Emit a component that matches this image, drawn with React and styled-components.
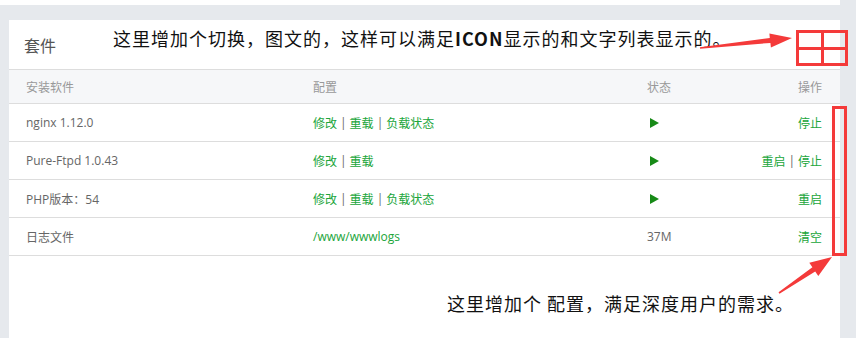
import React from 'react';
import styled, { createGlobalStyle } from 'styled-components';

const GlobalStyle = createGlobalStyle`
	html, body {
		margin: 0;
		padding: 0;
		background: #e6e9ed;
		font-family: "Open Sans", "Noto Sans CJK SC", sans-serif;
	}
`;

const Page = styled.div`
	position: relative;
	width: 856px;
	height: 338px;
	overflow: hidden;
	display: flex;
	flex-direction: column;
`;

const TopStrip = styled.div`
	width: 840px;
	height: 5px;
	background: #fff;
	margin-bottom: 15px;
`;

const Panel = styled.div`
	margin-left: 9px;
	width: 831px;
	flex: 1;
	background: #fff;
`;

const PanelHead = styled.div`
	height: 49px;
	display: flex;
	align-items: center;
	padding-left: 15px;
	font-family: "Noto Sans CJK SC", sans-serif;
	font-size: 16px;
	color: #555;
	border-bottom: 1px solid #ddd;
`;

const Row = styled.div`
	display: grid;
	grid-template-columns: 287px 334px 100px 1fr;
	align-items: center;
	height: ${p => (p.$head ? 33 : 37)}px;
	padding: 0 18px 0 17px;
	border-bottom: 1px solid #ddd;
	background: ${p => (p.$head ? '#f6f7f9' : '#fff')};
	color: ${p => (p.$head ? '#999' : '#666')};
	font-size: 12px;
`;

const Cell = styled.div`
	display: flex;
	align-items: center;
	justify-content: ${p => (p.$right ? 'flex-end' : 'flex-start')};
	white-space: nowrap;
`;

const Link = styled.span`
	color: #20a53a;
`;

const Sep = styled.span`
	color: #666;
	margin: 0 3px;
`;

const Play = styled.span`
	display: inline-block;
	width: 0;
	height: 0;
	margin-left: 3px;
	border-left: 9px solid #178a17;
	border-top: 5px solid transparent;
	border-bottom: 5px solid transparent;
`;

const Note = styled.div`
	position: absolute;
	left: ${p => p.$x}px;
	top: ${p => p.$y}px;
	font-family: "Noto Sans CJK SC", sans-serif;
	font-size: 18px;
	line-height: 20px;
	letter-spacing: 1px;
	color: #111;
	white-space: nowrap;
`;

const Marks = styled.svg`
	position: absolute;
	left: 0;
	top: 0;
	pointer-events: none;
`;

const Links = ({ items }) => (
	<Cell $right={items.right}>
		{items.list.map((t, i) => (
			<React.Fragment key={t}>
				{i > 0 && <Sep>|</Sep>}
				<Link>{t}</Link>
			</React.Fragment>
		))}
	</Cell>
);

const rows = [
	{ name: 'nginx 1.12.0', conf: ['修改', '重载', '负载状态'], play: true, ops: ['停止'] },
	{ name: 'Pure-Ftpd 1.0.43', conf: ['修改', '重载'], play: true, ops: ['重启', '停止'] },
	{ name: 'PHP版本：54', conf: ['修改', '重载', '负载状态'], play: true, ops: ['重启'] },
	{ name: '日志文件', conf: ['/www/wwwlogs'], size: '37M', ops: ['清空'] },
];

const red = '#f43a3a';

export default function App() {
	return (
		<>
			<GlobalStyle />
			<Page>
				<TopStrip />
				<Panel>
					<PanelHead>套件</PanelHead>
					<Row $head>
						<Cell>安装软件</Cell>
						<Cell>配置</Cell>
						<Cell>状态</Cell>
						<Cell $right>操作</Cell>
					</Row>
					{rows.map(r => (
						<Row key={r.name}>
							<Cell>{r.name}</Cell>
							<Links items={{ list: r.conf }} />
							<Cell>{r.play ? <Play /> : r.size}</Cell>
							<Links items={{ list: r.ops, right: true }} />
						</Row>
					))}
				</Panel>

				<Note $x={113} $y={28}>这里增加个切换，图文的，这样可以满足<b>ICON</b>显示的和文字列表显示的。</Note>
				<Note $x={447} $y={293}>这里增加个 配置，满足深度用户的需求。</Note>

				<Marks width="856" height="338" viewBox="0 0 856 338">
					<rect x="797.5" y="31.5" width="49" height="33" fill="none" stroke={red} strokeWidth="3" />
					<line x1="822.5" y1="31" x2="822.5" y2="65" stroke={red} strokeWidth="3" />
					<line x1="797" y1="48.5" x2="847" y2="48.5" stroke={red} strokeWidth="3" />
					<polygon fill={red} points="699.9,47.2 769.8,37.9 769.4,33.4 792,38 770.9,47.4 770.4,42.9 700.1,48.8" />
					<rect x="833.5" y="107.5" width="12" height="147" fill="none" stroke={red} strokeWidth="3" />
					<polygon fill={red} points="778.55,292.34 812.4,267.3 809.3,262.8 832,257 818.3,276 815.2,271.5 779.45,293.66" />
				</Marks>
			</Page>
		</>
	);
}
